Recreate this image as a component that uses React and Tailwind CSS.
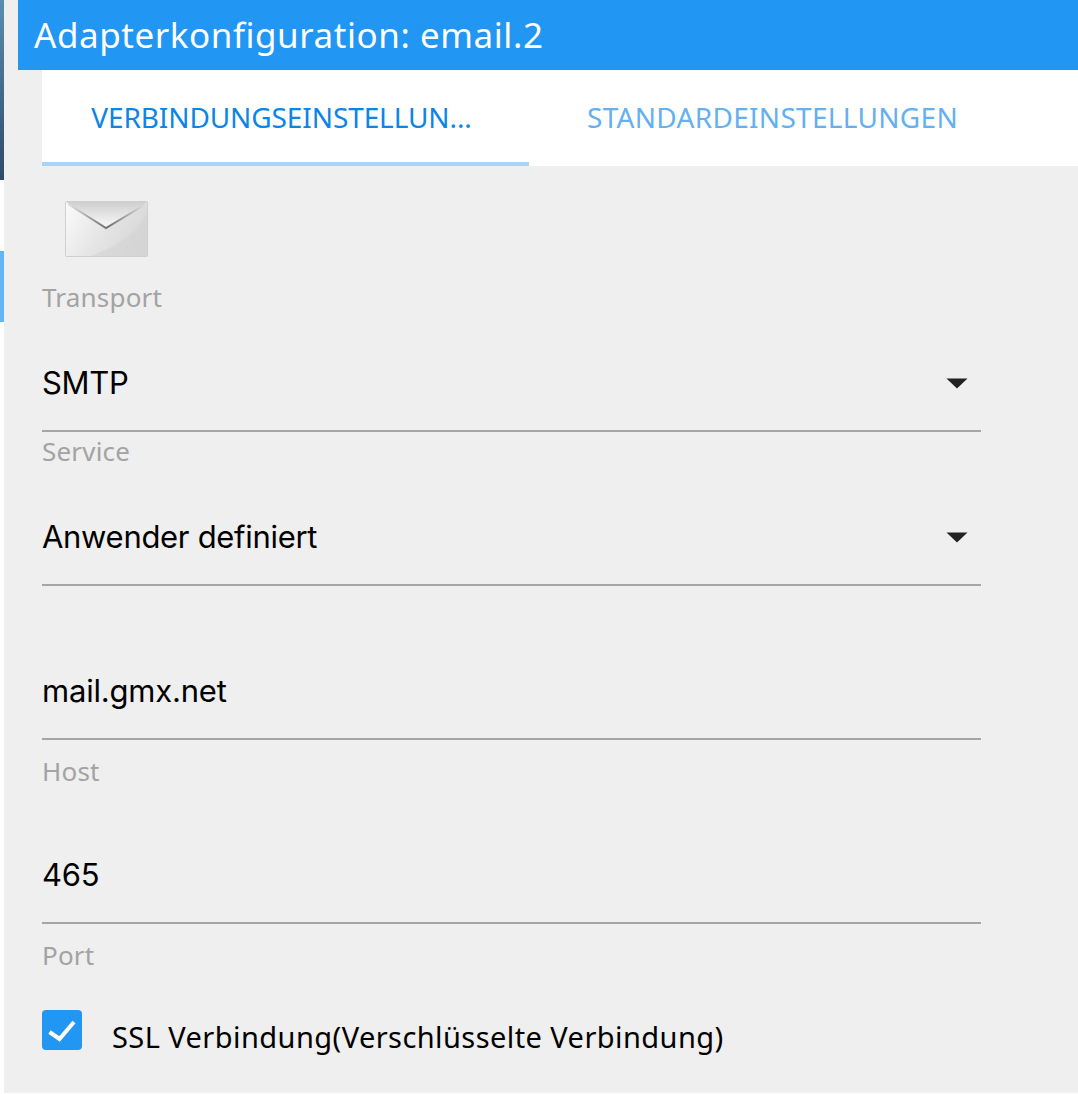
import React from "react";

const font = { fontFamily: '"Noto Sans", sans-serif' };
const inputFont = { fontFamily: 'Inter, sans-serif' };

const SelectField = ({ label, value }) => (
    <div className="w-[939px]">
        <div className="h-[23px] text-[26px] leading-[23px] tracking-[0.2px] text-[#a3a3a3]">{label}</div>
        <div className="mt-[59px] flex h-[64px] items-start justify-between border-b-2 border-[#a5a5a5]">
            <span className="text-[31px] leading-[30px] tracking-[-0.3px] text-black" style={inputFont}>{value}</span>
            <svg className="mt-[10px] mr-[13px]" width="22" height="11" viewBox="0 0 22 11">
                <path d="M0.500 0.500H21.500L11 10.500Z" fill="#222" />
            </svg>
        </div>
    </div>
);

const TextField = ({ value, label }) => (
    <div className="w-[939px]">
        <div className="flex h-[64px] items-start border-b-2 border-[#a5a5a5]">
            <span className="text-[31px] leading-[30px] tracking-[-0.2px] text-black" style={inputFont}>{value}</span>
        </div>
        <div className="mt-[20px] h-[23px] text-[26px] leading-[23px] tracking-[0.2px] text-[#a3a3a3]">{label}</div>
    </div>
);

const MailIcon = () => (
    <svg width="84" height="58" viewBox="0 0 84 58">
        <defs>
            <linearGradient id="body" x1="0" y1="0" x2="1" y2="0.4">
                <stop offset="0" stopColor="#fbfbfb" />
                <stop offset="0.55" stopColor="#e6e6e6" />
                <stop offset="1" stopColor="#d8d8d8" />
            </linearGradient>
            <linearGradient id="flap" x1="0" y1="0" x2="0" y2="1">
                <stop offset="0" stopColor="#cfcfcf" />
                <stop offset="1" stopColor="#f8f8f8" />
            </linearGradient>
            <linearGradient id="fold" x1="0" y1="0" x2="1" y2="0">
                <stop offset="0" stopColor="#e0e0e0" />
                <stop offset="0.5" stopColor="#6f6f6f" />
                <stop offset="1" stopColor="#e0e0e0" />
            </linearGradient>
        </defs>
        <rect x="0.500" y="0.500" width="82" height="55" rx="1" fill="url(#body)" stroke="#cfcfcf" />
        <path d="M1 1H82L41 26Z" fill="url(#flap)" />
        <path d="M82 12C71 34 50 46 26 55H82Z" fill="#d4d4d4" opacity="0.6" />
        <path d="M3 3L41 27L81 3" fill="none" stroke="url(#fold)" strokeWidth="2" />
    </svg>
);

export default function App() {
    return (
        <div className="flex h-[1094px] w-[1078px] overflow-hidden bg-white" style={font}>
            <div className="flex w-[4px] shrink-0 flex-col">
                <div className="h-[180px] bg-gradient-to-b from-[#5b8db0] to-[#2f4a66]" />
                <div className="mt-[71px] h-[71px] bg-[#64b5f6]" />
            </div>
            <div className="h-[1093px] w-[1074px] bg-[#efefef]">
                <div className="ml-[14px] flex h-[70px] items-center bg-[#2196f3] pl-[16px]">
                    <h1 className="text-[35px] font-normal tracking-[0.55px] text-white">Adapterkonfiguration: email.2</h1>
                </div>
                <div className="ml-[38px] flex h-[96px] bg-white">
                    <div className="flex w-[487px] items-center justify-center border-b-4 border-[#a6d5fa] pt-[2px] pr-[8px]">
                        <span className="text-[28px] tracking-[-0.1px] text-[#0c85e6]">VERBINDUNGSEINSTELLUN...</span>
                    </div>
                    <div className="flex w-[487px] items-center justify-center pb-[2px]">
                        <span className="text-[28px] tracking-[0.3px] text-[#64b0f2]">STANDARDEINSTELLUNGEN</span>
                    </div>
                </div>
                <div className="pl-[38px]">
                    <div className="ml-[23px] mt-[35px] h-[58px]"><MailIcon /></div>
                    <div className="mt-[27px] flex flex-col gap-[8px]">
                        <SelectField label="Transport" value="SMTP" />
                        <SelectField label="Service" value="Anwender definiert" />
                    </div>
                    <div className="mt-[90px] flex flex-col gap-[77px]">
                        <TextField value="mail.gmx.net" label="Host" />
                        <TextField value="465" label="Port" />
                    </div>
                    <label className="mt-[43px] flex items-start">
                        <span className="flex h-[40px] w-[40px] items-center justify-center rounded-[4px] bg-[#2196f3]">
                            <svg width="28" height="24" viewBox="0 0 28 24">
                                <path d="M1.500 14L11.500 21L26 4" fill="none" stroke="#fff" strokeWidth="4" />
                            </svg>
                        </span>
                        <span className="ml-[30px] mt-[7px] text-[29px] leading-[40px] tracking-[0.43px] text-black">SSL Verbindung(Verschlüsselte Verbindung)</span>
                    </label>
                </div>
            </div>
        </div>
    );
}
